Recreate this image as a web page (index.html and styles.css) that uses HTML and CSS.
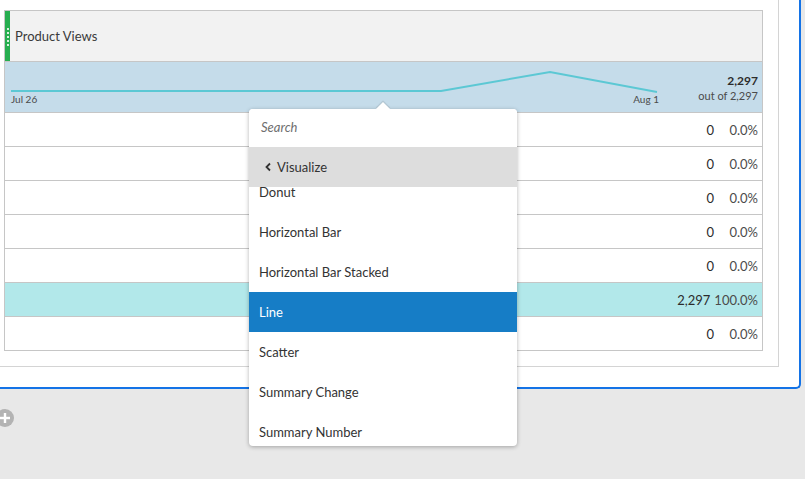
FILE: index.html
```html
<!DOCTYPE html>
<html>
<head>
<meta charset="utf-8">
<link rel="stylesheet" href="styles.css">
</head>
<body>
<div class="panel">
  <div class="inner">
    <div class="table">
      <div class="hdr">
        <span class="grip"><i></i><i></i><i></i><i></i><i></i></span>
        <span class="hdr-title">Product Views</span>
      </div>
      <div class="spark">
        <div class="spark-chart">
          <svg class="spark-svg" width="660" height="50" viewBox="0 0 660 50">
            <polyline points="6,29 436,29 545,10 652,30" fill="none" stroke="#5cc8d4" stroke-width="2"/>
          </svg>
          <div class="spark-labels"><span>Jul 26</span><span>Aug 1</span></div>
        </div>
        <div class="spark-total">
          <div class="total-num">2,297</div>
          <div class="total-of">out of 2,297</div>
        </div>
      </div>
      <div class="row"><span class="num">0</span><span class="pct">0.0%</span></div>
      <div class="row"><span class="num">0</span><span class="pct">0.0%</span></div>
      <div class="row"><span class="num">0</span><span class="pct">0.0%</span></div>
      <div class="row"><span class="num">0</span><span class="pct">0.0%</span></div>
      <div class="row"><span class="num">0</span><span class="pct">0.0%</span></div>
      <div class="row row-hl"><span class="num">2,297</span><span class="pct">100.0%</span></div>
      <div class="row row-last"><span class="num">0</span><span class="pct">0.0%</span></div>
    </div>
  </div>
</div>
<div class="add">
  <svg width="18" height="18" viewBox="0 0 18 18"><circle cx="9" cy="9" r="9" fill="#b3b3b3"/><rect x="4" y="7.8" width="10" height="2.4" fill="#fff"/><rect x="7.8" y="4" width="2.4" height="10" fill="#fff"/></svg>
</div>

<div class="menu">
  <div class="menu-search">Search</div>
  <div class="menu-back">
    <svg width="8" height="10" viewBox="0 0 8 10"><polyline points="6,1.5 2.5,5 6,8.5" fill="none" stroke="#333" stroke-width="1.8"/></svg>
    <span>Visualize</span>
  </div>
  <div class="menu-list">
    <div class="menu-scroll">
      <div class="item">Donut</div>
      <div class="item">Horizontal Bar</div>
      <div class="item">Horizontal Bar Stacked</div>
      <div class="item item-sel">Line</div>
      <div class="item">Scatter</div>
      <div class="item">Summary Change</div>
      <div class="item">Summary Number</div>
    </div>
  </div>
</div>
</body>
</html>
```
FILE: styles.css
```css
html, body {
  margin: 0;
  padding: 0;
}
body {
  background: #e8e8e8;
  font-family: Lato, "Noto Sans", sans-serif;
  color: #323232;
  width: 805px;
  height: 479px;
  overflow: hidden;
  position: relative;
}
.panel {
  width: 779px;
  height: 367px;
  padding: 0 20px 20px 0;
  background: #fff;
  border-right: 2px solid #1473e6;
  border-bottom: 2px solid #1473e6;
  border-bottom-right-radius: 5px;
}
.inner {
  width: 759px;
  height: 341px;
  padding: 10px 15px 15px 4px;
  border-right: 1px solid #d4d4d4;
  border-bottom: 1px solid #d4d4d4;
}
.table {
  border: 1px solid #c6c6c6;
  width: 757px;
  height: 339px;
  background: #fff;
}
.hdr {
  height: 50px;
  border-bottom: 1px solid #c6c6c6;
  background: #f2f2f2;
  display: flex;
  align-items: center;
}
.grip {
  width: 5px;
  height: 50px;
  background: #27ae50;
  display: flex;
  flex-direction: column;
  align-items: center;
  justify-content: center;
  gap: 2px;
  padding-top: 2px;
  box-sizing: border-box;
}
.grip i {
  display: block;
  width: 2px;
  height: 2px;
  background: #d9f0df;
}
.hdr-title {
  margin-left: 5px;
  font-size: 13px;
  color: #3a3a3a;
}
.spark {
  height: 50px;
  border-bottom: 1px solid #c6c6c6;
  background: #c5dcea;
  display: flex;
  justify-content: space-between;
}
.spark-chart {
  position: relative;
  width: 660px;
}
.spark-svg {
  display: block;
}
.spark-labels {
  position: absolute;
  left: 6px;
  top: 31px;
  width: 648px;
  display: flex;
  justify-content: space-between;
  font-size: 10px;
  color: #4b4b4b;
}
.spark-total {
  padding: 11px 4px 0 0;
  text-align: right;
}
.total-num {
  font-size: 12px;
  font-weight: 700;
  color: #2c2c2c;
  line-height: 15px;
}
.total-of {
  font-size: 11px;
  color: #4b4b4b;
  line-height: 15px;
}
.row {
  height: 33px;
  border-bottom: 1px solid #c6c6c6;
  display: flex;
  justify-content: flex-end;
  align-items: center;
  padding-right: 4px;
  font-size: 13px;
  color: #2c2c2c;
}
.row-hl {
  background: #b2e8ea;
}
.row-last {
  border-bottom: none;
}
.num {
  margin-right: 4px;
}
.pct {
  color: #4b4b4b;
  min-width: 40px;
  text-align: right;
}
.add {
  margin: 20px 0 0 -4px;
  width: 18px;
  height: 18px;
}
.add svg {
  display: block;
}
.menu {
  position: absolute;
  left: 249px;
  top: 109px;
  width: 268px;
  height: 337px;
  background: #fff;
  border-radius: 4px;
  box-shadow: 0 1px 4px rgba(0, 0, 0, 0.3);
  font-size: 13px;
  color: #333;
}
.menu::before {
  content: "";
  position: absolute;
  left: 129px;
  top: -5px;
  width: 10px;
  height: 10px;
  background: #fff;
  transform: rotate(45deg);
  box-shadow: -1px -1px 1px rgba(0, 0, 0, 0.12);
}
.menu-search {
  position: relative;
  height: 38px;
  line-height: 37px;
  padding-left: 12px;
  font-style: italic;
  color: #6e6e6e;
  border-radius: 4px 4px 0 0;
  background: #fff;
}
.menu-back {
  height: 40px;
  background: #dddddd;
  display: flex;
  align-items: center;
  padding-left: 15px;
  gap: 5px;
  color: #333;
}
.menu-back svg {
  display: block;
}
.menu-list {
  height: 259px;
  overflow: hidden;
}
.menu-scroll {
  margin-top: -15px;
}
.item {
  height: 40px;
  line-height: 40px;
  padding-left: 10px;
  color: #333;
}
.item-sel {
  background: #167dc6;
  color: #fff;
}
```
